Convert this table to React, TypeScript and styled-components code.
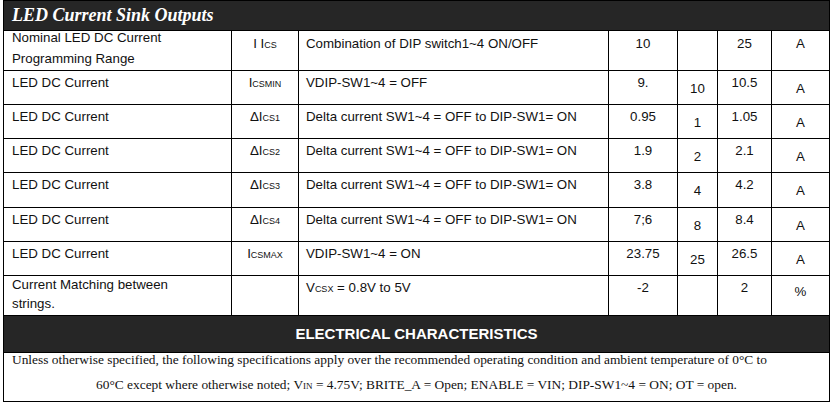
import React from 'react'
import styled, { createGlobalStyle } from 'styled-components'

const GlobalStyle = createGlobalStyle`
  html, body {
    margin: 0;
    padding: 0;
    background: #FFFFFF;
  }
  body {
    font-family: "Liberation Sans", Arial, sans-serif;
    color: #000000;
  }
`

const COLUMNS = '227px 66px 309px 68px 39px 53px 57px'

type Align = 'left' | 'center'

interface ISpecRow {
  height: number
  label: React.ReactNode
  labelLines?: { lh: number; shift: number }
  symbol: React.ReactNode
  condition: React.ReactNode
  min: string
  typ: string
  max: string
  unit: string
  top: number
  low: number
}

const Sc = styled.span`
  font-size: 9px;
`

const rows: ISpecRow[] = [
  {
    height: 39,
    label: <>Nominal LED DC Current<br />Programming Range</>,
    labelLines: { lh: 21, shift: -4 },
    symbol: <>I I<Sc>CS</Sc></>,
    condition: 'Combination of DIP switch1~4 ON/OFF',
    min: '10', typ: '', max: '25', unit: 'A',
    top: 5, low: 5,
  },
  {
    height: 33,
    label: 'LED DC Current',
    symbol: <>I<Sc>CSMIN</Sc></>,
    condition: 'VDIP-SW1~4 = OFF',
    min: '9.', typ: '10', max: '10.5', unit: 'A',
    top: 4, low: 10,
  },
  {
    height: 33,
    label: 'LED DC Current',
    symbol: <>ΔI<Sc>CS1</Sc></>,
    condition: 'Delta current SW1~4 = OFF to DIP-SW1= ON',
    min: '0.95', typ: '1', max: '1.05', unit: 'A',
    top: 4, low: 10,
  },
  {
    height: 33,
    label: 'LED DC Current',
    symbol: <>ΔI<Sc>CS2</Sc></>,
    condition: 'Delta current SW1~4 = OFF to DIP-SW1= ON',
    min: '1.9', typ: '2', max: '2.1', unit: 'A',
    top: 4, low: 10,
  },
  {
    height: 34,
    label: 'LED DC Current',
    symbol: <>ΔI<Sc>CS3</Sc></>,
    condition: 'Delta current SW1~4 = OFF to DIP-SW1= ON',
    min: '3.8', typ: '4', max: '4.2', unit: 'A',
    top: 4, low: 10,
  },
  {
    height: 33,
    label: 'LED DC Current',
    symbol: <>ΔI<Sc>CS4</Sc></>,
    condition: 'Delta current SW1~4 = OFF to DIP-SW1= ON',
    min: '7;6', typ: '8', max: '8.4', unit: 'A',
    top: 4, low: 10,
  },
  {
    height: 33,
    label: 'LED DC Current',
    symbol: <>I<Sc>CSMAX</Sc></>,
    condition: 'VDIP-SW1~4 = ON',
    min: '23.75', typ: '25', max: '26.5', unit: 'A',
    top: 4, low: 10,
  },
  {
    height: 39,
    label: <>Current Matching between<br />strings.</>,
    labelLines: { lh: 19, shift: -1 },
    symbol: '',
    condition: <>V<Sc>CSX</Sc> = 0.8V to 5V</>,
    min: '-2', typ: '', max: '2', unit: '%',
    top: 4, low: 8,
  },
]

const App: React.FC = () => {
  return (
    <>
      <GlobalStyle />
      <Sheet>
        <TitleBar>LED Current Sink Outputs</TitleBar>
        {rows.map((r, i) => (
          <Row key={i} $h={r.height}>
            <Cell $pt={r.labelLines ? 0 : r.top} $pl={8}>
              {r.labelLines
                ? <Lines $lh={r.labelLines.lh} $shift={r.labelLines.shift}>{r.label}</Lines>
                : r.label}
            </Cell>
            <Cell $pt={r.top} $align="center">{r.symbol}</Cell>
            <Cell $pt={r.top} $pl={7}>{r.condition}</Cell>
            <Cell $pt={r.top} $align="center">{r.min}</Cell>
            <Cell $pt={r.low} $align="center">{r.typ}</Cell>
            <Cell $pt={r.top} $align="center">{r.max}</Cell>
            <Cell $pt={r.low} $align="center">{r.unit}</Cell>
          </Row>
        ))}
        <Banner>ELECTRICAL CHARACTERISTICS</Banner>
        <Note>
          <NoteLine>
            Unless otherwise specified, the following specifications apply over the recommended operating condition and ambient temperature of 0°C to
          </NoteLine>
          <NoteLine $align="center">
            60°C except where otherwise noted; V<Sc>IN</Sc> = 4.75V; BRITE_A = Open; ENABLE = VIN; DIP-SW1~4 = ON; OT = open.
          </NoteLine>
        </Note>
      </Sheet>
    </>
  )
}

export default App


const Sheet = styled.div`
  width: 825px;
  margin-left: 3px;
  border: 1px solid #000000;
  background: #000000;
  display: flex;
  flex-direction: column;
  gap: 1px;
`

const TitleBar = styled.div`
  height: 29px;
  background: #262626;
  color: #FFFFFF;
  font-family: "Liberation Serif", "Times New Roman", serif;
  font-weight: bold;
  font-style: italic;
  font-size: 18px;
  line-height: 29px;
  padding-left: 8px;
`

const Row = styled.div<{ $h: number }>`
  display: grid;
  grid-template-columns: ${COLUMNS};
  gap: 1px;
  height: ${({ $h }) => $h}px;
`

const Cell = styled.div<{ $pt: number; $pl?: number; $align?: Align }>`
  background: #FFFFFF;
  box-sizing: border-box;
  padding-top: ${({ $pt }) => $pt}px;
  padding-left: ${({ $pl }) => $pl ?? 0}px;
  text-align: ${({ $align }) => $align ?? 'left'};
  font-size: 13.3px;
  line-height: 16px;
  color: #111111;
  white-space: nowrap;
  overflow: visible;
`

const Lines = styled.div<{ $lh: number; $shift: number }>`
  line-height: ${({ $lh }) => $lh}px;
  margin-top: ${({ $shift }) => $shift}px;
`

const Banner = styled.div`
  height: 36px;
  background: #262626;
  color: #FFFFFF;
  font-family: "Liberation Sans", Arial, sans-serif;
  font-weight: bold;
  font-size: 15px;
  line-height: 36px;
  text-align: center;
`

const Note = styled.div`
  height: 48px;
  background: #FFFFFF;
  display: flex;
  flex-direction: column;
  gap: 11px;
  font-family: "Liberation Serif", "Times New Roman", serif;
  font-size: 13.4px;
  color: #111111;
`

const NoteLine = styled.div<{ $align?: Align }>`
  line-height: 14px;
  padding-left: ${({ $align }) => ($align === 'center' ? 0 : 8)}px;
  text-align: ${({ $align }) => $align ?? 'left'};
  white-space: nowrap;
`
